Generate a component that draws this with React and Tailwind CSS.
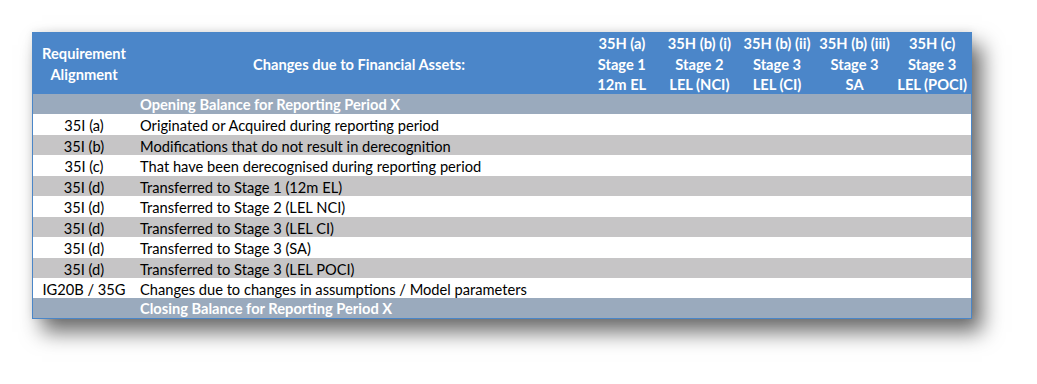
import React from "react";

const stages = [
  ["35H (a)", "Stage 1", "12m EL"],
  ["35H (b) (i)", "Stage 2", "LEL (NCI)"],
  ["35H (b) (ii)", "Stage 3", "LEL (CI)"],
  ["35H (b) (iii)", "Stage 3", "SA"],
  ["35H (c)", "Stage 3", "LEL (POCI)"],
];

const rows = [
  ["35I (a)", "Originated or Acquired during reporting period", false, "h-[21px]"],
  ["35I (b)", "Modifications that do not result in derecognition", true, "h-[20px]"],
  ["35I (c)", "That have been derecognised during reporting period", false, "h-[21px]"],
  ["35I (d)", "Transferred to Stage 1 (12m EL)", true, "h-[20px]"],
  ["35I (d)", "Transferred to Stage 2 (LEL NCI)", false, "h-[21px]"],
  ["35I (d)", "Transferred to Stage 3 (LEL CI)", true, "h-[20px]"],
  ["35I (d)", "Transferred to Stage 3 (SA)", false, "h-[21px]"],
  ["35I (d)", "Transferred to Stage 3 (LEL POCI)", true, "h-[20px]"],
  ["IG20B / 35G", "Changes due to changes in assumptions / Model parameters", false, "h-[20px]"],
];

function Cells() {
  return (
    <div className="flex">
      {stages.map((_, i) => (
        <div key={i} className="w-[77.6px]" />
      ))}
    </div>
  );
}

export default function App() {
  return (
    <div className="w-[1037px] h-[384px] bg-white pt-[32px] pl-[32px] font-['Lato',sans-serif] text-[14.67px] text-black">
      <div className="w-[940px] border border-[#4a86c8] bg-white shadow-[10px_13px_20px_rgba(0,0,0,0.58),0_-1px_8px_rgba(0,0,0,0.08)]">
        {/* Header */}
        <div className="flex h-[61px] bg-[#4b86c9] text-white font-bold">
          <div className="w-[102px] flex flex-col items-center justify-center leading-[21px] pt-[1px]">
            <span>Requirement</span>
            <span>Alignment</span>
          </div>
          <div className="w-[448px] flex items-center justify-center pt-[2px]">
            Changes due to Financial Assets:
          </div>
          {stages.map((s, i) => (
            <div
              key={i}
              className="w-[77.6px] flex flex-col items-center justify-center leading-[20.7px] pt-[3px] whitespace-nowrap"
            >
              {s.map((t, j) => (
                <span key={j}>{t}</span>
              ))}
            </div>
          ))}
        </div>
        {/* Opening balance */}
        <div className="flex items-center h-[20px] pt-[2px] bg-[#9aaabd] text-white font-bold">
          <div className="w-[102px]" />
          <div className="w-[448px] pl-[5px]">Opening Balance for Reporting Period X</div>
        </div>
        {rows.map(([code, text, gray, h], i) => (
          <div
            key={i}
            className={`flex items-center pt-[3px] ${h} ${gray ? "bg-[#c6c5c6]" : "bg-white"}`}
          >
            <div className="w-[102px] text-center whitespace-nowrap">{code}</div>
            <div className="w-[448px] pl-[5px] whitespace-nowrap">{text}</div>
            <Cells />
          </div>
        ))}
        {/* Closing balance */}
        <div className="flex items-center h-[20px] pt-[2px] bg-[#9aaabd] text-white font-bold">
          <div className="w-[102px]" />
          <div className="w-[448px] pl-[5px]">Closing Balance for Reporting Period X</div>
        </div>
      </div>
    </div>
  );
}
